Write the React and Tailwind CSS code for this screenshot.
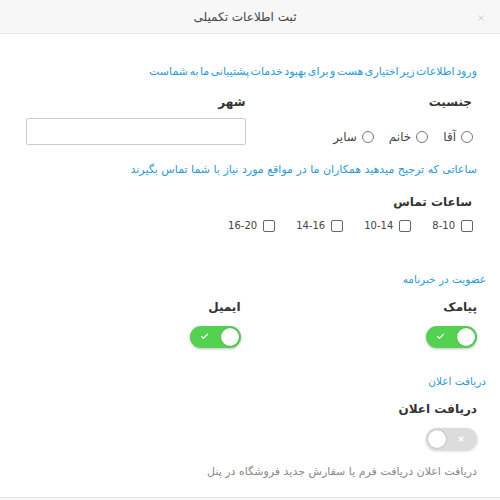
import { Check, X } from 'lucide-react';

const font = { fontFamily: '"DejaVu Sans", sans-serif' };

const genders = ['آقا', 'خانم', 'سایر'];
const hours = ['8-10', '10-14', '14-16', '16-20'];

function Toggle({ on }) {
  if (on) {
    return (
      <div className="relative h-[22px] w-[51px] rounded-full bg-[#55d152] shadow-[0_1px_3px_rgba(0,0,0,0.25)]">
        <Check className="absolute left-[10px] top-[6px] h-[9px] w-[9px] text-white" strokeWidth={3} />
        <span className="absolute right-[2px] top-[2px] h-[18px] w-[18px] rounded-full bg-white shadow-[0_0_2px_rgba(0,0,0,0.3)]" />
      </div>
    );
  }
  return (
    <div className="relative h-[22px] w-[51px] rounded-full bg-[#dcdcdc] shadow-[0_1px_3px_rgba(0,0,0,0.2)]">
      <X className="absolute right-[12px] top-[7px] h-[8px] w-[8px] text-white" strokeWidth={3.5} />
      <span className="absolute left-[2px] top-[2px] h-[18px] w-[18px] rounded-full bg-white shadow-[0_0_2px_rgba(0,0,0,0.3)]" />
    </div>
  );
}

export default function App() {
  return (
    <div dir="rtl" style={font} className="h-[500px] w-[500px] overflow-hidden bg-white text-[#333]">
      {/* header */}
      <div className="relative flex h-[34px] items-center justify-center border-b border-[#e5e5e5] bg-[#f7f7f7]">
        <span className="mr-[10px] text-[12px] text-[#444]">ثبت اطلاعات تکمیلی</span>
        <X className="absolute right-[14px] top-[13px] h-[10px] w-[10px] text-[#c8c8c8]" strokeWidth={2} />
      </div>

      <div className="pl-[25px] pr-[23px] pt-[30px]">
        <p className="text-[11px] leading-[16px] text-[#2a9ad5] [word-spacing:-2px]">
          ورود اطلاعات زیر اختیاری هست و برای بهبود خدمات پشتیبانی ما به شماست
        </p>

        <div className="mt-[14px] grid grid-cols-2 gap-[11px]">
          <div>
            <div className="pr-[5px] text-[12px] font-bold leading-[16px]">جنسیت</div>
            <div className="mt-[18px] flex items-center gap-[15px] pr-[4px]">
              {genders.map((g) => (
                <label key={g} className="flex items-center gap-[5px] text-[12px] text-[#444]">
                  <span className="h-[12px] w-[12px] rounded-full border border-[#777] bg-white" />
                  {g}
                </label>
              ))}
            </div>
          </div>
          <div>
            <div className="text-[12px] font-bold leading-[16px]">شهر</div>
            <input className="mt-[8px] h-[27px] w-[220px] rounded-[2px] border border-[#ccc] bg-white" />
          </div>
        </div>

        <p className="mt-[16px] text-[11px] leading-[16px] text-[#2a9ad5]">
          ساعاتی که ترجیح میدهید همکاران ما در مواقع مورد نیاز با شما تماس بگیرند
        </p>

        <div className="mt-[16px] pr-[5px] text-[12px] font-bold leading-[16px]">ساعات تماس</div>
        <div className="mt-[8px] flex items-center gap-[21px] pr-[4px]">
          {hours.map((h) => (
            <label key={h} className="flex items-center gap-[6px] text-[10px] text-[#444]">
              <span className="h-[12px] w-[12px] rounded-[2px] border border-[#666] bg-white" />
              <span dir="ltr">{h}</span>
            </label>
          ))}
        </div>
      </div>

      <div className="pl-[25px] pr-[14px] pt-[38px]">
        <p className="text-[10.5px] leading-[16px] text-[#2a9ad5]">عضویت در خبرنامه</p>
        <div className="mt-[12px] grid grid-cols-2 gap-[11px] pr-[9px]">
          <div>
            <div className="text-[12px] font-bold leading-[16px]">پیامک</div>
            <div className="mt-[11px]">
              <Toggle on />
            </div>
          </div>
          <div className="pr-[5px]">
            <div className="text-[12px] font-bold leading-[16px]">ایمیل</div>
            <div className="mt-[11px]">
              <Toggle on />
            </div>
          </div>
        </div>

        <p className="mt-[25px] text-[10.5px] leading-[16px] text-[#2a9ad5]">دریافت اعلان</p>
        <div className="pr-[9px]">
          <div className="mt-[12px] text-[12px] font-bold leading-[16px]">دریافت اعلان</div>
          <div className="mt-[11px]">
            <Toggle on={false} />
          </div>
          <p className="mt-[14px] text-[11px] leading-[16px] text-[#888]">
            دریافت اعلان دریافت فرم یا سفارش جدید فروشگاه در پنل
          </p>
        </div>
      </div>
      <div className="mt-[17px] h-[10px] border-t border-[#e5e5e5] bg-[#f7f7f7]" />
    </div>
  );
}
